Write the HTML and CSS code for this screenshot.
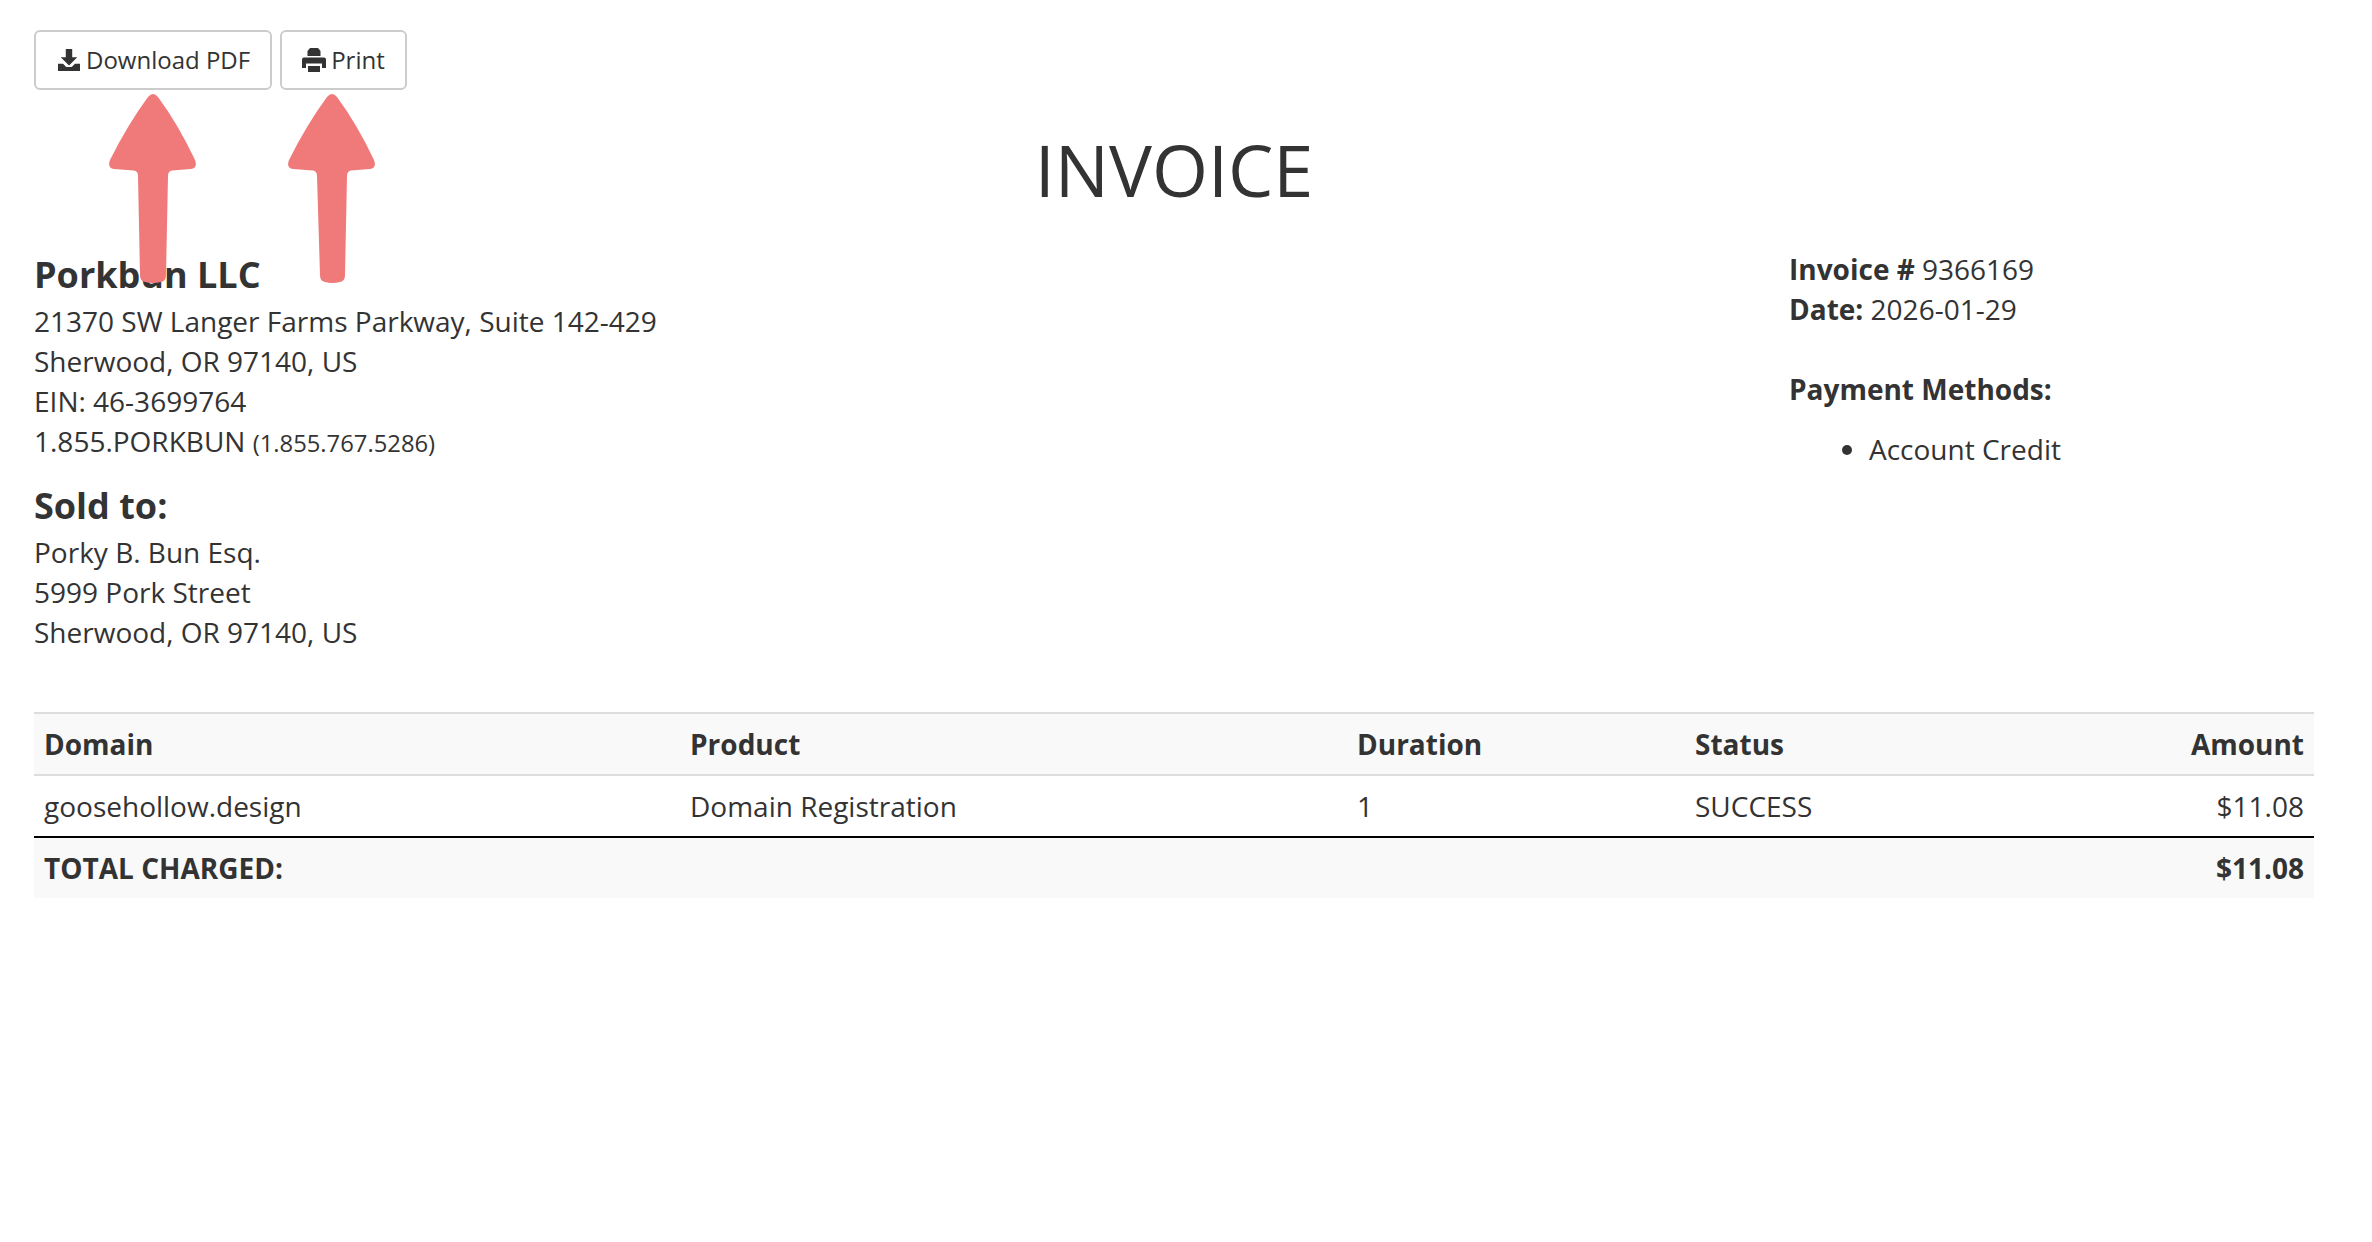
FILE: index.html
```html
<!DOCTYPE html>
<html lang="en">
<head>
<meta charset="utf-8">
<title>Invoice</title>
<link rel="stylesheet" href="styles.css">
</head>
<body>
<div class="page">
  <div class="actions">
    <a class="btn"><svg class="ico ico-dl" viewBox="0 0 24 24"><path d="M8.500 0h7v9h5.500l-9 9-9-9h5.500z"/><path d="M0 16h5.500l3.500 3.500h6l3.500-3.500H24v8H0z"/></svg>Download PDF</a>
    <a class="btn"><svg class="ico ico-pr" viewBox="0 0 24 24"><path d="M5.500 8V3L8 0h8l2.500 3v5z"/><path d="M2 9.500h20a2 2 0 0 1 2 2V20h-4v-4.500H4V20H0v-8.500a2 2 0 0 1 2-2z"/><path d="M6 18h12v6H6z"/></svg>Print</a>
  </div>
  <h1 class="title">INVOICE</h1>
  <div class="info">
    <div class="parties">
      <h2 class="name">Porkbun LLC</h2>
      <div>21370 SW Langer Farms Parkway, Suite 142-429</div>
      <div>Sherwood, OR 97140, US</div>
      <div>EIN: 46-3699764</div>
      <div>1.855.PORKBUN <small>(1.855.767.5286)</small></div>
      <h2 class="name sold">Sold to:</h2>
      <div>Porky B. Bun Esq.</div>
      <div>5999 Pork Street</div>
      <div>Sherwood, OR 97140, US</div>
    </div>
    <div class="meta">
      <div><b>Invoice #</b> 9366169</div>
      <div><b>Date:</b> 2026-01-29</div>
      <div class="pay"><b>Payment Methods:</b></div>
      <ul><li>Account Credit</li></ul>
    </div>
  </div>
  <table class="items">
    <colgroup><col class="c1"><col class="c2"><col class="c3"><col class="c4"><col class="c5"></colgroup>
    <thead>
      <tr><th>Domain</th><th>Product</th><th>Duration</th><th>Status</th><th class="r">Amount</th></tr>
    </thead>
    <tbody>
      <tr><td>goosehollow.design</td><td>Domain Registration</td><td>1</td><td>SUCCESS</td><td class="r">$11.08</td></tr>
    </tbody>
    <tfoot>
      <tr><th colspan="4">TOTAL CHARGED:</th><th class="r">$11.08</th></tr>
    </tfoot>
  </table>
</div>
<svg class="arrows" viewBox="0 0 2372 1242" aria-hidden="true">
  <path class="arrow" d="M148 97Q153 91 158 97Q178 124 195 160Q198 168 191 169L172 170.500Q168 171 168 176L166 275Q166 281 161 282Q153 284 145 282Q140 281 140 275L138 176Q138 171 134 170.500L114 169Q107 168 110 160Q128 124 148 97Z"/>
  <path class="arrow" d="M327 97Q332 91 337 97Q357 124 374 160Q377 168 370 169L351 170.500Q347 171 347 176L345 275Q345 281 340 282Q332 284 325 282Q320 281 320 275L317 176Q317 171 313 170.500L293 169Q286 168 289 160Q307 124 327 97Z"/>
</svg>
</body>
</html>
```
FILE: styles.css
```css
* { box-sizing: border-box; }
html, body { margin: 0; background: #fff; }
body {
  font-family: "Open Sans", "Liberation Sans", sans-serif;
  font-size: 28px;
  line-height: 40px;
  color: #333;
}
.page { padding: 30px 58px 0 34px; }
.actions { display: flex; gap: 8px; }
.btn {
  display: flex;
  align-items: center;
  height: 60px;
  padding: 0 20px;
  border: 2px solid #ccc;
  border-radius: 6px;
  font-size: 24px;
  color: #333;
}
.ico { fill: #333; margin-right: 5px; }
.ico-dl { width: 22px; height: 24px; margin-left: 2px; margin-right: 6px; }
.ico-pr { width: 24px; height: 24px; }
.title {
  margin: 39px 0 0;
  font-size: 72px;
  font-weight: 400;
  line-height: 80px;
  text-align: center;
}
.info { display: flex; justify-content: space-between; margin-top: 40px; }
.name { margin: 0; font-size: 36px; line-height: 52px; font-weight: 700; }
.sold { margin-top: 17px; }
small { font-size: 23.800px; }
.meta { width: 525px; }
b { font-weight: 700; }
.pay { margin-top: 40px; }
ul { margin: 20px 0 0; padding: 0 0 0 80px; }
.items { width: 100%; margin-top: 60px; border-collapse: collapse; table-layout: fixed; }
.c1 { width: 646px; }
.c2 { width: 667px; }
.c3 { width: 338px; }
.c4 { width: 300px; }
th, td { padding: 10px; text-align: left; font-weight: 400; }
th { font-weight: 700; }
thead th { background: #f9f9f9; border-top: 2px solid #ddd; border-bottom: 2px solid #ddd; }
tbody td { border-bottom: 2px solid #000; }
tfoot th { background: #f9f9f9; }
.r { text-align: right; }
.arrows { position: absolute; left: 0; top: 0; width: 2372px; height: 1242px; pointer-events: none; }
.arrow { fill: #f07a7a; }
```
